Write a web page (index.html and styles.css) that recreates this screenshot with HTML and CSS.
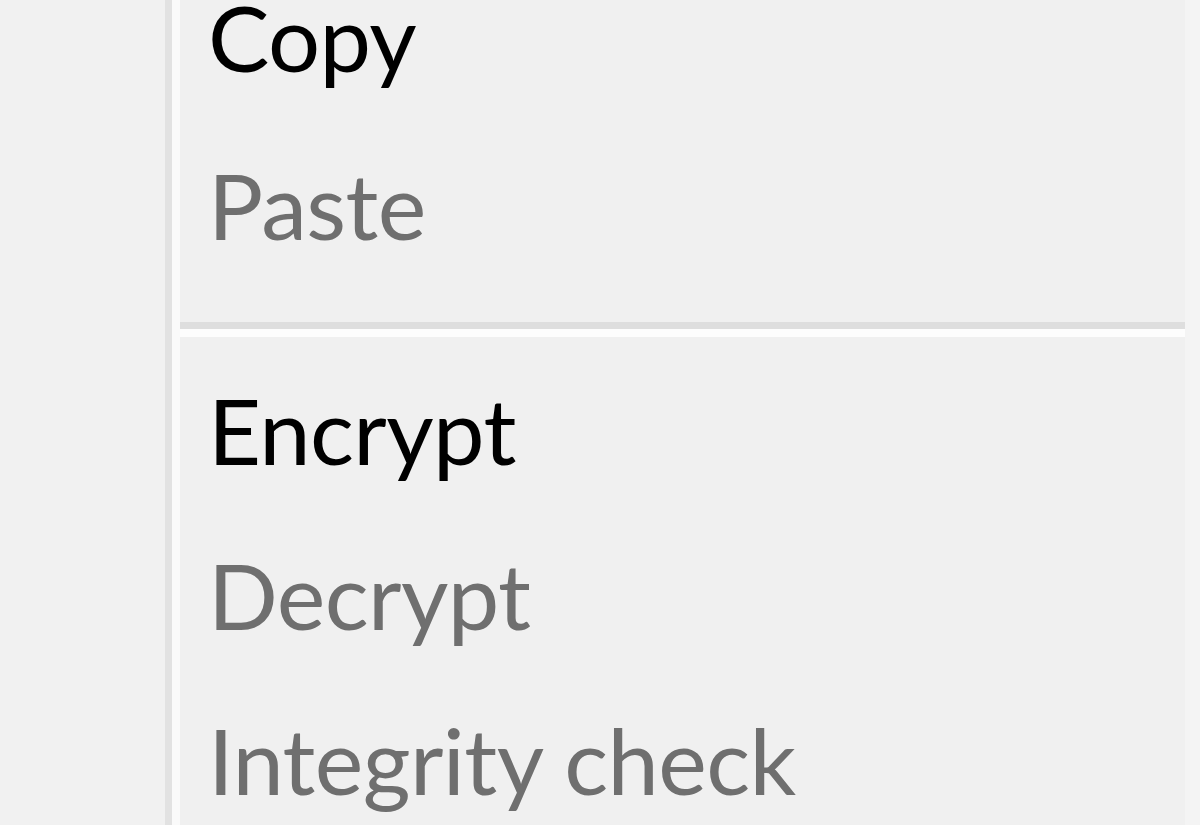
FILE: index.html
```html
<!DOCTYPE html>
<html lang="en">
<head>
<meta charset="utf-8">
<title>Context menu</title>
<link rel="stylesheet" href="styles.css">
</head>
<body>
<div class="menu">
  <div class="gutter"></div>
  <div class="vrule"></div>
  <div class="vrule-light"></div>
  <div class="items">
    <ul class="group group-first">
      <li class="item">Copy</li>
      <li class="item disabled">Paste</li>
    </ul>
    <div class="separator"><div class="sep-dark"></div><div class="sep-light"></div></div>
    <ul class="group">
      <li class="item">Encrypt</li>
      <li class="item disabled">Decrypt</li>
      <li class="item disabled">Integrity check</li>
    </ul>
  </div>
  <div class="edge"></div>
</div>
</body>
</html>
```
FILE: styles.css
```css
html, body {
  margin: 0;
  padding: 0;
  height: 100%;
  overflow: hidden;
}
body {
  background: #f0f0f0;
  font-family: Lato, "Open Sans", "DejaVu Sans", sans-serif;
}
.menu {
  display: flex;
  height: 825px;
  overflow: hidden;
}
.gutter {
  width: 165px;
  flex: none;
  background: #f1f1f1;
}
.vrule {
  width: 7px;
  flex: none;
  background: #e2e2e2;
}
.vrule-light {
  width: 8px;
  flex: none;
  background: #fafafa;
}
.items {
  flex: 1;
  display: flex;
  flex-direction: column;
  background: #f0f0f0;
}
.edge {
  width: 15px;
  flex: none;
  background: #f4f4f4;
}
.group {
  list-style: none;
  margin: 0;
  padding: 0;
  display: flex;
  flex-direction: column;
}
.group-first {
  margin-top: -46px;
  gap: 3px;
}
.item {
  height: 165px;
  line-height: 165px;
  font-size: 92px;
  letter-spacing: -0.6px;
  padding-left: 28px;
  color: #000;
  white-space: nowrap;
}
.item.disabled {
  color: #6f6f6f;
}
.separator {
  margin: 35px 0 10px;
  display: flex;
  flex-direction: column;
}
.sep-dark {
  height: 7px;
  background: #dedede;
}
.sep-light {
  height: 8px;
  background: #fdfdfd;
}
```
